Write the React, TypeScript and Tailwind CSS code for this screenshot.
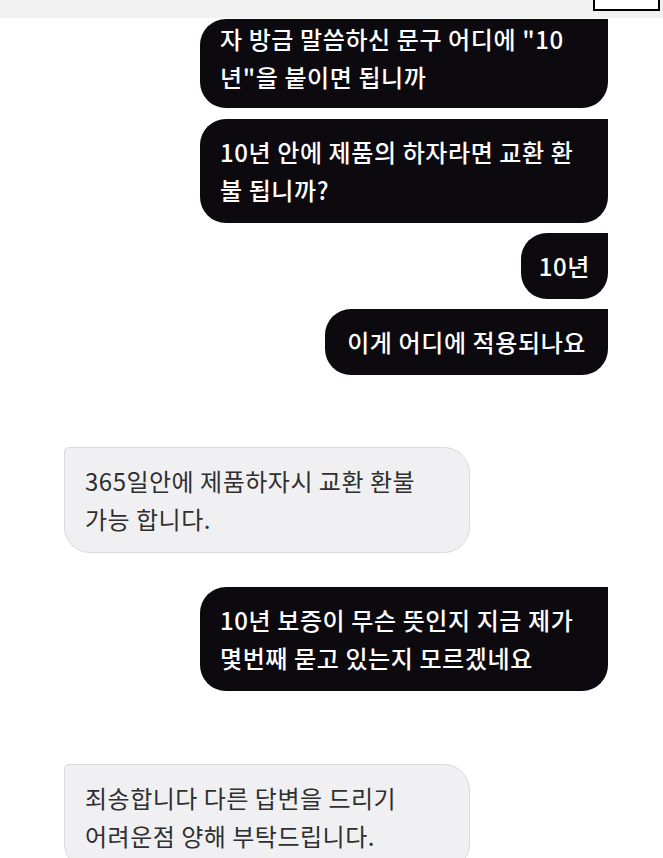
const font = {
  fontFamily: '"Noto Sans CJK KR", "Noto Sans", sans-serif',
};

type BubbleProps = {
  lines: string[];
  className?: string;
};

function SentBubble({ lines, className = "px-[20px]" }: BubbleProps) {
  return (
    <div className="flex justify-end pr-[55px]">
      <div
        className={`bg-[#0d0a0f] text-white font-medium text-[24px] leading-[38px] tracking-[0.6px] rounded-[26px] rounded-tr-none py-[14px] ${className}`}
      >
        {lines.map((l, i) => (
          <div key={i} className="whitespace-nowrap">
            {l}
          </div>
        ))}
      </div>
    </div>
  );
}

function ReceivedBubble({ lines }: BubbleProps) {
  return (
    <div className="flex justify-start pl-[64px]">
      <div className="w-[406px] bg-[#f0f0f2] border border-[#d9d9dc] text-[#2f2f2f] text-[24px] leading-[38px] tracking-[0.5px] rounded-[26px] rounded-tl-[5px] px-[20px] py-[14px]">
        {lines.map((l, i) => (
          <div key={i} className="whitespace-nowrap">
            {l}
          </div>
        ))}
      </div>
    </div>
  );
}

export default function App() {
  return (
    <div
      className="w-[663px] h-[858px] bg-white overflow-hidden flex flex-col"
      style={font}
    >
      {/* top bar */}
      <div className="h-[18px] bg-[#f1f1f1] flex justify-end pr-[3px] shrink-0">
        <div className="w-[67px] h-[11px] bg-white border-2 border-t-0 border-black" />
      </div>

      <div className="flex flex-col">
        <SentBubble
          className="w-[408px] px-[20px] pt-[1px] pb-[12px] mt-[1px]"
          lines={['자 방금 말씀하신 문구 어디에 "10', '년"을 붙이면 됩니까']}
        />
        <div className="h-[11px]" />
        <SentBubble
          className="w-[408px] px-[20px]"
          lines={["10년 안에 제품의 하자라면 교환 환", "불 됩니까?"]}
        />
        <div className="h-[10px]" />
        <SentBubble className="px-[18px]" lines={["10년"]} />
        <div className="h-[10px]" />
        <SentBubble className="px-[22px]" lines={["이게 어디에 적용되나요"]} />
        <div className="h-[72px]" />
        <ReceivedBubble
          lines={["365일안에 제품하자시 교환 환불", "가능 합니다."]}
        />
        <div className="h-[34px]" />
        <SentBubble
          className="w-[408px] px-[20px]"
          lines={["10년 보증이 무슨 뜻인지 지금 제가", "몇번째 묻고 있는지 모르겠네요"]}
        />
        <div className="h-[73px]" />
        <ReceivedBubble
          lines={["죄송합니다 다른 답변을 드리기", "어려운점 양해 부탁드립니다."]}
        />
      </div>
    </div>
  );
}
